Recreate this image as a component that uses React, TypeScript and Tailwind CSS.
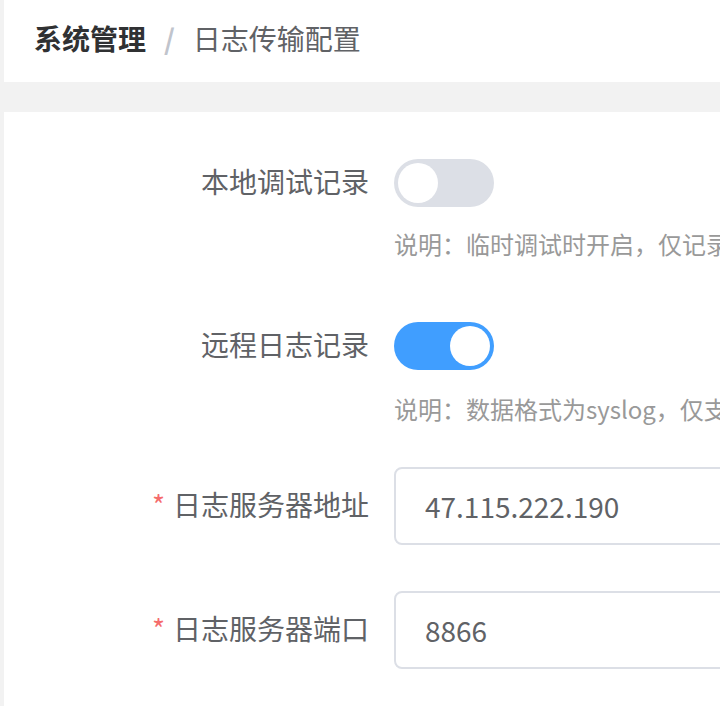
import { useState } from 'react'

const font = { fontFamily: '"Noto Sans CJK SC", "Noto Sans", sans-serif' }

function Switch({ on, onToggle }: { on: boolean; onToggle: () => void }) {
  return (
    <button
      type="button"
      onClick={onToggle}
      className={`relative h-[48px] w-[100px] shrink-0 rounded-full transition-colors ${on ? 'bg-[#409eff]' : 'bg-[#dcdfe6]'}`}
    >
      <span
        className={`absolute top-[4px] h-[40px] w-[40px] rounded-full bg-white transition-all ${on ? 'left-[56px]' : 'left-[4px]'}`}
      />
    </button>
  )
}

function Label({ text, required }: { text: string; required?: boolean }) {
  return (
    <div className="w-[390px] shrink-0 pb-[4px] pr-[25px] text-right text-[28px] text-[#606266]">
      {required && <span className="mr-[8px] text-[#f56c6c]">*</span>}
      {text}
    </div>
  )
}

export default function App() {
  const [local, setLocal] = useState(false)
  const [remote, setRemote] = useState(true)

  return (
    <div className="min-h-screen overflow-hidden bg-[#f2f2f2] pl-[4px]" style={font}>
      <div className="flex h-[82px] items-center bg-white px-[30px] pb-[6px] text-[28px]">
        <span className="font-bold text-[#303133]">系统管理</span>
        <span className="mx-[18px] font-bold text-[#c0c4cc]">/</span>
        <span className="text-[#606266]">日志传输配置</span>
      </div>

      <div className="mt-[30px] min-h-[600px] bg-white pt-[31px]">
        <div className="mb-[44px]">
          <div className="flex h-[80px] items-center">
            <Label text="本地调试记录" />
            <Switch on={local} onToggle={() => setLocal(!local)} />
          </div>
          <p className="mt-[3px] whitespace-nowrap pl-[390px] text-[24px] leading-[36px] text-[#999999]">
            说明：临时调试时开启，仅记录本地调试日志，请勿长期开启
          </p>
        </div>

        <div className="mb-[40px]">
          <div className="flex h-[80px] items-center">
            <Label text="远程日志记录" />
            <Switch on={remote} onToggle={() => setRemote(!remote)} />
          </div>
          <p className="mt-[5px] whitespace-nowrap pl-[390px] text-[24px] leading-[36px] text-[#999999]">
            说明：数据格式为syslog，仅支持UDP协议传输
          </p>
        </div>

        <div className="mb-[46px] flex h-[78px] items-center">
          <Label text="日志服务器地址" required />
          <input
            defaultValue="47.115.222.190"
            className="h-[78px] w-[600px] shrink-0 rounded-[8px] border-2 border-[#dcdfe6] px-[29px] text-[28px] text-[#606266] outline-none"
          />
        </div>

        <div className="flex h-[78px] items-center">
          <Label text="日志服务器端口" required />
          <input
            defaultValue="8866"
            className="h-[78px] w-[600px] shrink-0 rounded-[8px] border-2 border-[#dcdfe6] px-[29px] text-[28px] text-[#606266] outline-none"
          />
        </div>
      </div>
    </div>
  )
}
